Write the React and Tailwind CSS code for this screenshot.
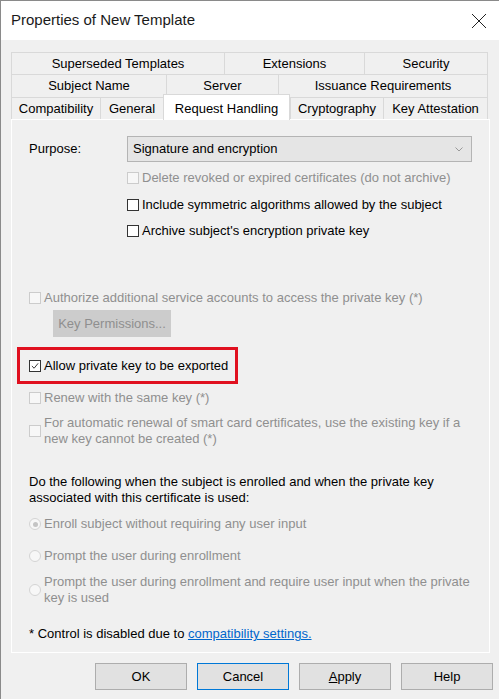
import React from 'react';

const font = { fontFamily: '"Liberation Sans", Arial, sans-serif' };

const CheckBox = ({ checked, disabled }) => (
  <span
    className={`w-[12px] h-[12px] shrink-0 border flex items-center justify-center ${
      disabled ? 'border-[#cccccc] bg-[#f7f7f7]' : 'border-[#333333] bg-white'
    }`}
  >
    {checked && (
      <svg width="8" height="8" viewBox="0 0 9 9">
        <path d="M1 4.5 L3.5 7 L8 1.5" fill="none" stroke="#333" strokeWidth="1.1" />
      </svg>
    )}
  </span>
);

const Radio = ({ checked }) => (
  <span className="w-[12px] h-[12px] shrink-0 rounded-full border border-[#d4d4d4] bg-[#f7f7f7] flex items-center justify-center">
    {checked && <span className="w-[5px] h-[5px] rounded-full bg-[#c4c4c4]" />}
  </span>
);

const CheckRow = ({ label, checked, disabled, className = '' }) => (
  <div className={`h-[20px] flex items-center gap-[3px] ${className}`}>
    <CheckBox checked={checked} disabled={disabled} />
    <span className={disabled ? 'text-[#8f8f8f]' : 'text-black'}>{label}</span>
  </div>
);

const Tab = ({ label, w, active }) => (
  <div
    className={`h-full flex items-center justify-center border-l border-t border-[#d9d9d9] last:border-r ${
      active ? 'bg-white' : 'bg-[#f0f0f0]'
    }`}
    style={{ width: w }}
  >
    {label}
  </div>
);

const Button = ({ children, focused }) => (
  <div
    className={`w-[92px] h-[27px] flex items-center justify-center bg-[#e1e1e1] border ${
      focused ? 'border-[#0078d7]' : 'border-[#adadad]'
    }`}
  >
    {children}
  </div>
);

export default function App() {
  return (
    <div
      className="w-[499px] h-[699px] bg-[#f0f0f0] border-l border-t border-[#8a8a8a] text-[13px] text-black overflow-hidden"
      style={font}
    >
      {/* Title bar */}
      <div className="h-[39px] bg-white flex items-center justify-between pl-[10px] pr-[12px]">
        <span className="text-[15px] text-[#1a1a1a]">Properties of New Template</span>
        <svg width="16" height="16" viewBox="0 0 16 16">
          <path d="M1 1 L15 15 M15 1 L1 15" stroke="#222" strokeWidth="1" />
        </svg>
      </div>

      {/* Tabs */}
      <div className="pl-[10px] pt-[12px]">
        <div className="flex h-[22px]">
          <Tab label="Superseded Templates" w={213} />
          <Tab label="Extensions" w={140} />
          <Tab label="Security" w={124} />
        </div>
        <div className="flex h-[23px]">
          <Tab label="Subject Name" w={155} />
          <Tab label="Server" w={112} />
          <Tab label="Issuance Requirements" w={210} />
        </div>
        <div className="flex h-[22px] items-end">
          <Tab label="Compatibility" w={89} />
          <Tab label="General" w={63} />
          <div className="w-[127px] h-[26px] -mb-[1px] relative bg-white border-l border-t border-r border-[#d9d9d9] flex items-start justify-center pt-[4px]">
            Request Handling
          </div>
          <Tab label="Cryptography" w={93} />
          <Tab label="Key Attestation" w={105} />
        </div>
      </div>

      {/* Panel */}
      <div className="ml-[10px] w-[479px] border border-white bg-[#f0f0f0] px-[17px]">
        <div className="mt-[16px] h-[26px] flex items-center">
          <span className="w-[98px]">Purpose:</span>
          <div className="w-[345px] h-[26px] bg-[#e5e5e5] border border-[#b4b4b4] flex items-center justify-between pl-[5px] pr-[8px]">
            <span>Signature and encryption</span>
            <svg width="8" height="5" viewBox="0 0 8 5">
              <path d="M0.5 0.5 L4 4 L7.5 0.5" fill="none" stroke="#999" strokeWidth="1" />
            </svg>
          </div>
        </div>
        <div className="pl-[98px]">
          <CheckRow className="mt-[6px]" disabled label="Delete revoked or expired certificates (do not archive)" />
          <CheckRow className="mt-[7px]" label="Include symmetric algorithms allowed by the subject" />
          <CheckRow className="mt-[6px]" label="Archive subject's encryption private key" />
        </div>

        <CheckRow className="mt-[47px]" disabled label="Authorize additional service accounts to access the private key (*)" />
        <div className="mt-[2px] ml-[24px] w-[118px] h-[27px] bg-[#cccccc] flex items-center justify-center text-[#8f8f8f]">
          Key Permissions...
        </div>

        <div className="mt-[10px] -ml-[12px] w-[221px] h-[37px] border-[3px] border-[#e0101f] pl-[9px] flex items-center">
          <CheckRow checked label="Allow private key to be exported" />
        </div>

        <CheckRow className="mt-[4px]" disabled label="Renew with the same key (*)" />
        <div className="mt-[7px] flex items-center gap-[3px] text-[#8f8f8f] leading-[16px]">
          <CheckBox disabled />
          <span>
            For automatic renewal of smart card certificates, use the existing key if a
            <br />
            new key cannot be created (*)
          </span>
        </div>

        <div className="mt-[27px] leading-[16px]">
          Do the following when the subject is enrolled and when the private key
          <br />
          associated with this certificate is used:
        </div>

        <div className="mt-[8px] h-[20px] flex items-center gap-[3px] text-[#8f8f8f]">
          <Radio checked />
          <span>Enroll subject without requiring any user input</span>
        </div>
        <div className="mt-[12px] h-[20px] flex items-center gap-[3px] text-[#8f8f8f]">
          <Radio />
          <span>Prompt the user during enrollment</span>
        </div>
        <div className="mt-[8px] flex items-center gap-[3px] text-[#8f8f8f] leading-[16px]">
          <Radio />
          <span>
            Prompt the user during enrollment and require user input when the private
            <br />
            key is used
          </span>
        </div>

        <div className="mt-[18px] mb-[8px] h-[20px] flex items-center">
          <span>* Control is disabled due to&nbsp;</span>
          <span className="text-[#0066cc] underline">compatibility settings.</span>
        </div>
      </div>

      {/* Buttons */}
      <div className="mt-[10px] pl-[94px] flex gap-[10px]">
        <Button>OK</Button>
        <Button focused>Cancel</Button>
        <Button>
          <span>
            <span className="underline">A</span>pply
          </span>
        </Button>
        <Button>Help</Button>
      </div>
    </div>
  );
}
